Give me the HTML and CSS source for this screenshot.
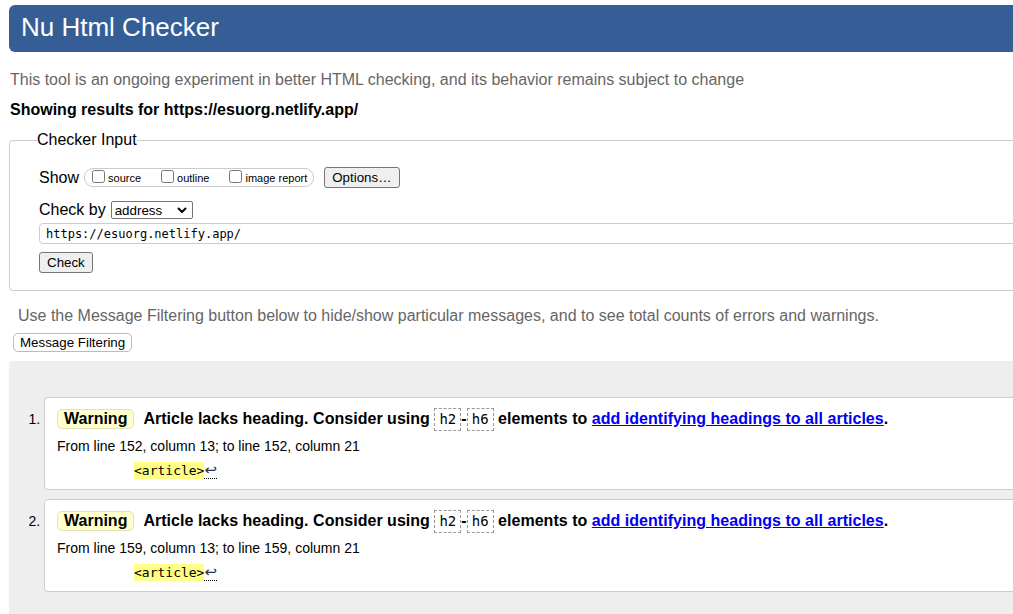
FILE: index.html
```html
<!DOCTYPE html>
<html lang="en">
<head>
<meta charset="utf-8">
<title>Nu Html Checker</title>
<link rel="stylesheet" href="styles.css">
</head>
<body>
<div class="page">
  <h1 class="banner">Nu Html Checker</h1>
  <p class="intro">This tool is an ongoing experiment in better HTML checking, and its behavior remains subject to change</p>
  <p class="showing">Showing results for https://esuorg.netlify.app/</p>

  <fieldset class="checker">
    <legend class="legend">Checker Input</legend>
    <div class="row show-row">
      <span class="row-label">Show</span>
      <span class="pill">
        <label class="opt"><input type="checkbox" class="cb"><span>source</span></label>
        <label class="opt"><input type="checkbox" class="cb"><span>outline</span></label>
        <label class="opt"><input type="checkbox" class="cb"><span>image report</span></label>
      </span>
      <button class="btn" type="button">Options…</button>
    </div>
    <div class="row by-row">
      <span class="row-label">Check by</span>
      <span class="select-wrap">
        <select class="select"><option>address</option></select>
        <svg class="chev" width="10" height="6" viewBox="0 0 10 6"><path d="M1 1 L5 5 L9 1" fill="none" stroke="#000" stroke-width="2"/></svg>
      </span>
    </div>
    <input class="url" type="text" value="https://esuorg.netlify.app/">
    <div class="submit-row"><button class="btn check-btn" type="button">Check</button></div>
  </fieldset>

  <p class="hint">Use the Message Filtering button below to hide/show particular messages, and to see total counts of errors and warnings.</p>
  <button class="filter-btn" type="button">Message Filtering</button>

  <div class="results">
    <ol class="messages">
      <li class="msg">
        <p class="msg-line"><strong class="badge">Warning</strong><span class="msg-text">Article lacks heading. Consider using <code class="code">h2</code>-<code class="code">h6</code> elements to <a class="link" href="#">add identifying headings to all articles</a>.</span></p>
        <p class="location">From line 152, column 13; to line 152, column 21</p>
        <p class="extract"><mark class="hl">&lt;article&gt;</mark><span class="lf">↩</span></p>
      </li>
      <li class="msg">
        <p class="msg-line"><strong class="badge">Warning</strong><span class="msg-text">Article lacks heading. Consider using <code class="code">h2</code>-<code class="code">h6</code> elements to <a class="link" href="#">add identifying headings to all articles</a>.</span></p>
        <p class="location">From line 159, column 13; to line 159, column 21</p>
        <p class="extract"><mark class="hl">&lt;article&gt;</mark><span class="lf">↩</span></p>
      </li>
    </ol>
  </div>
</div>
</body>
</html>
```

FILE: styles.css
```css
html, body {
  margin: 0;
  padding: 0;
  overflow: hidden;
  background: #fff;
}
body {
  font-family: "Liberation Sans", Arial, sans-serif;
  font-size: 16px;
  color: #000;
}
.page {
  width: 1300px;
}
.banner {
  margin: 5px 0 0 9px;
  height: 47px;
  line-height: 45px;
  padding-left: 12px;
  background: #365e96;
  color: #fff;
  font-size: 26px;
  font-weight: normal;
  border-radius: 6px 0 0 6px;
}
.intro {
  margin: 19px 0 0 10px;
  line-height: 18px;
  color: #666;
}
.showing {
  margin: 12px 0 0 10px;
  line-height: 18px;
  font-weight: bold;
}
.checker {
  margin: 12px 0 0 9px;
  padding: 0 0 17px 29px;
  border: 1px solid #ccc;
  border-radius: 4px;
  min-width: 0;
}
.legend {
  padding: 0;
  margin-left: -2px;
  line-height: 18px;
  font-size: 16px;
}
.row {
  display: flex;
  align-items: center;
}
.row-label {
  line-height: 18px;
}
.show-row {
  margin-top: 18px;
  height: 21px;
}
.pill {
  display: flex;
  align-items: center;
  height: 17px;
  margin-left: 5px;
  padding: 0 6px 0 7px;
  border: 1px solid #ccc;
  border-radius: 9px;
  gap: 20px;
}
.opt {
  display: flex;
  align-items: center;
  font-size: 11px;
}
.cb {
  width: 13px;
  height: 13px;
  margin: 0 3px 3px 0;
}
.btn {
  font-family: "Liberation Sans", Arial, sans-serif;
  font-size: 13.33px;
  height: 21px;
  padding: 0 7px;
  background: #efefef;
  border: 1px solid #767676;
  border-radius: 3px;
  color: #000;
}
.show-row .btn {
  margin-left: 10px;
}
.by-row {
  margin-top: 13px;
  height: 18px;
}
.select-wrap {
  display: flex;
  align-items: center;
  width: 80px;
  height: 16px;
  margin-left: 5px;
  border: 1px solid #767676;
  border-radius: 2px;
}
.select {
  appearance: none;
  -webkit-appearance: none;
  border: 0;
  background: transparent;
  font-family: "Liberation Sans", Arial, sans-serif;
  font-size: 13.33px;
  padding: 0 0 0 3px;
  flex: 1;
  height: 16px;
  outline: none;
  color: #000;
}
.chev {
  margin-right: 5px;
}
.url {
  display: block;
  margin-top: 4px;
  width: 1200px;
  height: 21px;
  box-sizing: border-box;
  padding: 0 6px;
  border: 1px solid #ccc;
  border-radius: 4px;
  font-family: "DejaVu Sans Mono", "Liberation Mono", monospace;
  font-size: 12px;
  color: #000;
}
.submit-row {
  margin-top: 8px;
  height: 21px;
}
.hint {
  margin: 16px 0 0 18px;
  line-height: 18px;
  color: #666;
}
.filter-btn {
  display: block;
  margin: 8px 0 0 13px;
  height: 19px;
  padding: 0 6px;
  font-family: "Liberation Sans", Arial, sans-serif;
  font-size: 13.33px;
  background: #fff;
  border: 1px solid #bbb;
  border-radius: 5px;
  color: #000;
}
.results {
  margin: 9px 0 0 9px;
  padding-top: 36px;
  padding-bottom: 40px;
  background: #eee;
  border-radius: 4px 0 0 0;
}
.messages {
  margin: 0;
  padding: 0 0 0 35px;
  list-style: decimal;
}
.msg {
  font-size: 14px;
  background: #fff;
  border: 1px solid #ccc;
  border-radius: 4px;
  padding: 9px 12px 10px;
  margin-bottom: 9px;
}
.msg-line {
  margin: 0;
  font-size: 16px;
  line-height: 23px;
  font-weight: bold;
}
.badge {
  display: inline-block;
  line-height: 18px;
  padding: 0 6px;
  margin-right: 9px;
  background: #ffc;
  border: 1px solid #e2e2b5;
  border-radius: 5px;
}
.msg-text {
  letter-spacing: 0.03px;
}
.code {
  display: inline-block;
  font-family: "DejaVu Sans Mono", "Liberation Mono", monospace;
  font-size: 14px;
  font-weight: normal;
  line-height: 21px;
  padding: 0 4px;
  border: 1px dashed #999;
}
.link {
  color: #0000ee;
  text-decoration: underline;
}
.location {
  margin: 7px 0 0;
  line-height: 17px;
}
.extract {
  margin: 7px 0 0;
  padding-left: 77px;
  line-height: 17px;
  height: 17px;
}
.hl {
  display: inline-block;
  vertical-align: top;
  background: #ff8;
  color: #000;
  font-family: "DejaVu Sans Mono", "Liberation Mono", monospace;
  font-size: 13px;
  line-height: 17px;
}
.lf {
  display: inline-block;
  vertical-align: top;
  font-family: "DejaVu Sans", sans-serif;
  font-size: 15px;
  line-height: 16px;
  color: #333;
  border-bottom: 1px dotted #000;
}
```
